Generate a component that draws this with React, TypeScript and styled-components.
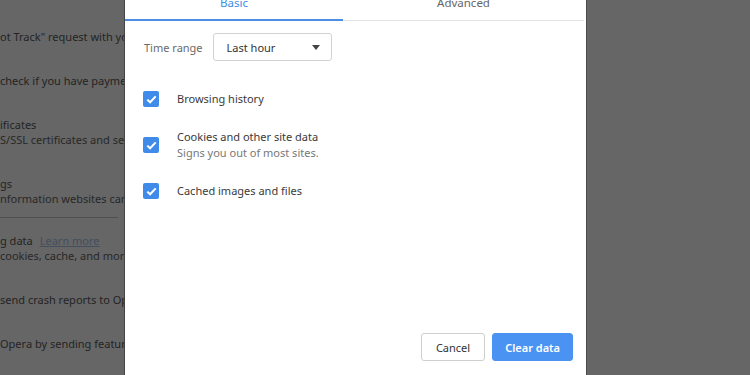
import React from "react"
import styled, { createGlobalStyle } from "styled-components"

const GlobalStyle = createGlobalStyle`
  html, body {
    margin: 0;
    padding: 0;
    width: 750px;
    height: 375px;
    overflow: hidden;
    background: #ffffff;
    font-family: "Noto Sans", "Open Sans", Arial, sans-serif;
  }
`

const Page = styled.div`
  display: flex;
  flex-direction: column;
  padding-top: 14px;
  width: 750px;
`

const SettingItem = styled.div<{ $divider?: boolean }>`
  padding: 14.5px 0;
  padding-bottom: ${({ $divider }) => ($divider ? "11.5px" : "14.5px")};
  font-size: 11px;
  line-height: 15px;
  white-space: nowrap;
  width: 118px;
  border-bottom: ${({ $divider }) => ($divider ? "1px solid #c8c8c8" : "none")};
`

const ItemTitle = styled.div`
  color: #5a5a5a;
`

const ItemDesc = styled.div`
  color: #666666;
`

const PageLink = styled.a`
  color: #a9c4ee;
  text-decoration: underline;
  margin-left: 7px;
`

const Scrim = styled.div`
  position: fixed;
  inset: 0;
  background: rgba(0, 0, 0, 0.6);
`

const Dialog = styled.div`
  position: absolute;
  left: 124px;
  top: -14px;
  width: 463px;
  height: 389px;
  box-sizing: border-box;
  background: #ffffff;
  border-left: 1px solid #444444;
  border-right: 1px solid #4a4a4a;
  display: flex;
  flex-direction: column;
  padding-bottom: 14px;
`

const Tabs = styled.div`
  display: flex;
  margin-right: 2px;
  border-bottom: 1px solid #e4e4e4;
`

const Tab = styled.div<{ $active?: boolean; $width?: number }>`
  height: 33px;
  display: flex;
  align-items: center;
  justify-content: center;
  font-size: 11.5px;
  flex: ${({ $width }) => ($width ? `0 0 ${$width}px` : "1")};
  color: ${({ $active }) => ($active ? "#3b8ee4" : "#666666")};
  border-bottom: 2px solid ${({ $active }) => ($active ? "#4a8fe3" : "transparent")};
  margin-bottom: -1px;
`

const Body = styled.div`
  display: flex;
  flex-direction: column;
  padding: 12px 19px 0 18px;
`

const RangeRow = styled.div`
  display: flex;
  align-items: center;
  gap: 10px;
  font-size: 11px;
  margin-bottom: 24px;
`

const RangeLabel = styled.span`
  color: #6a6a6a;
  padding-left: 1px;
`

const Select = styled.div`
  width: 119px;
  height: 28px;
  box-sizing: border-box;
  border: 1px solid #d2d2d2;
  border-radius: 3px;
  display: flex;
  align-items: center;
  justify-content: space-between;
  padding: 0 11px 0 13px;
  color: #333333;
`

const Caret = styled.span`
  width: 0;
  height: 0;
  border-left: 4.5px solid transparent;
  border-right: 4.5px solid transparent;
  border-top: 5px solid #444444;
`

const CheckRow = styled.label`
  display: flex;
  align-items: center;
  gap: 18px;
  font-size: 11px;
  line-height: 16px;
  color: #3a3a3a;
  padding: 6px 0;
  margin-bottom: 10px;
`

const Box = styled.span`
  width: 16px;
  height: 16px;
  flex: 0 0 16px;
  border-radius: 2px;
  background: #408be9;
  display: flex;
  align-items: center;
  justify-content: center;
`

const SubText = styled.div`
  color: #777777;
`

const Footer = styled.div`
  margin-top: auto;
  display: flex;
  justify-content: flex-end;
  gap: 7px;
  padding-right: 13px;
`

const Button = styled.button<{ $primary?: boolean }>`
  height: 28px;
  padding: 0 ${({ $primary }) => ($primary ? "12px" : "14px")};
  border-radius: 3px;
  font-family: inherit;
  font-size: 11px;
  font-weight: ${({ $primary }) => ($primary ? 600 : 400)};
  color: ${({ $primary }) => ($primary ? "#ffffff" : "#333333")};
  background: ${({ $primary }) => ($primary ? "#4b93f3" : "#ffffff")};
  border: 1px solid ${({ $primary }) => ($primary ? "#4b93f3" : "#cfcfcf")};
`

const Check = () => (
  <Box>
    <svg width="11" height="9" viewBox="0 0 11 9">
      <path d="M1.3 4.6 L4.1 7.3 L9.7 1.4" fill="none" stroke="#fff" strokeWidth="2" />
    </svg>
  </Box>
)

const settings = [
  { title: 'ot Track" request with your browsing traffic' },
  { title: "check if you have payment methods saved" },
  { title: "ificates", desc: "S/SSL certificates and settings" },
  { title: "gs", desc: "nformation websites can use", divider: true },
  { title: "g data", link: "Learn more", desc: "cookies, cache, and more" },
  { title: "send crash reports to Opera" },
  { title: "Opera by sending feature usage information" },
]

const App = () => {
  return (
    <>
      <GlobalStyle />
      <Page>
        {settings.map((s, i) => (
          <SettingItem key={i} $divider={s.divider}>
            <ItemTitle>
              {s.title}
              {s.link && <PageLink>{s.link}</PageLink>}
            </ItemTitle>
            {s.desc && <ItemDesc>{s.desc}</ItemDesc>}
          </SettingItem>
        ))}
      </Page>
      <Scrim>
        <Dialog>
          <Tabs>
            <Tab $active $width={218}>Basic</Tab>
            <Tab>Advanced</Tab>
          </Tabs>
          <Body>
            <RangeRow>
              <RangeLabel>Time range</RangeLabel>
              <Select>
                Last hour
                <Caret />
              </Select>
            </RangeRow>
            <CheckRow>
              <Check />
              <div>Browsing history</div>
            </CheckRow>
            <CheckRow>
              <Check />
              <div>
                <div>Cookies and other site data</div>
                <SubText>Signs you out of most sites.</SubText>
              </div>
            </CheckRow>
            <CheckRow>
              <Check />
              <div>Cached images and files</div>
            </CheckRow>
          </Body>
          <Footer>
            <Button>Cancel</Button>
            <Button $primary>Clear data</Button>
          </Footer>
        </Dialog>
      </Scrim>
    </>
  )
}

export default App
